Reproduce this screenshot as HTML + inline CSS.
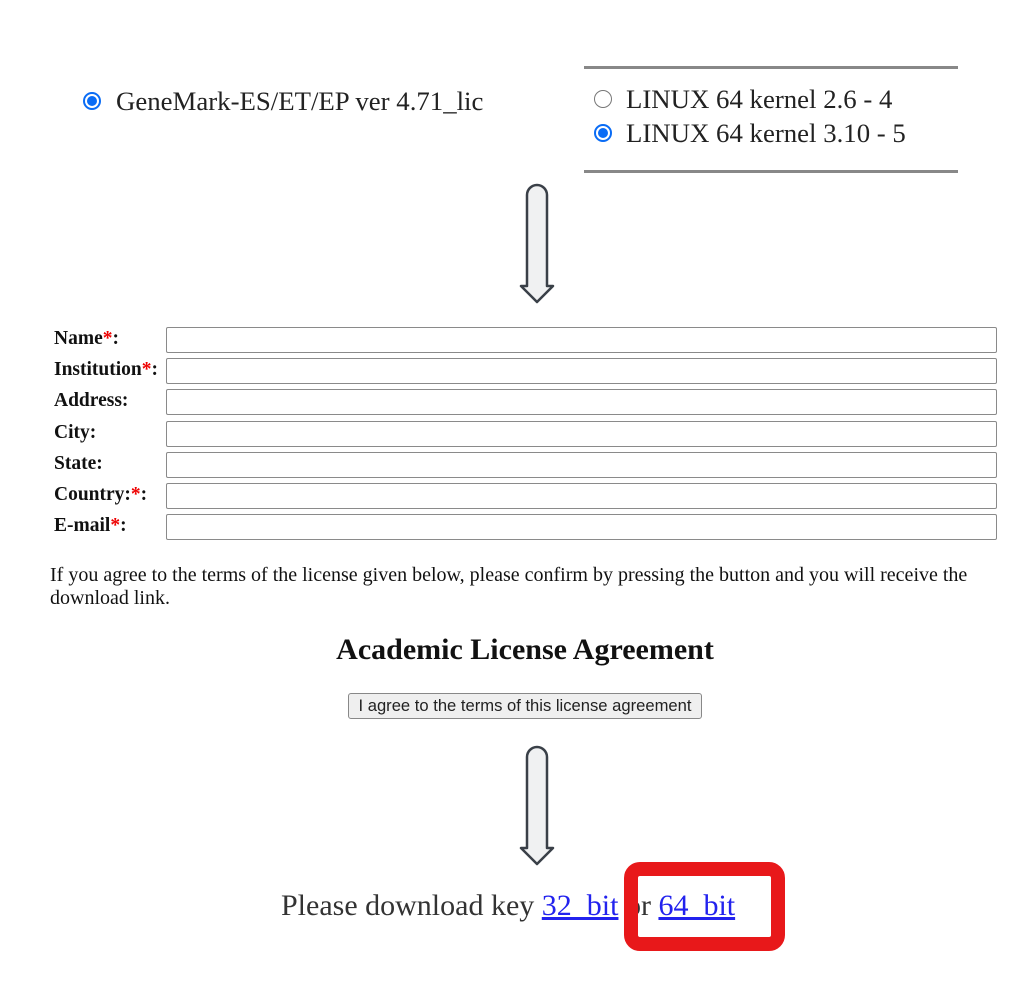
<!DOCTYPE html>
<html><head><meta charset="utf-8"><style>
body{margin:0;width:1024px;height:998px;background:#fff;font-family:"Liberation Serif",serif;color:#222;position:relative;overflow:hidden}
.a{position:absolute;white-space:nowrap}
.rad{position:absolute;width:18px;height:18px;border-radius:50%;box-sizing:border-box}
.on{border:2px solid #0a6cf5;background:#fff}
.on::after{content:"";position:absolute;left:2px;top:2px;width:10px;height:10px;border-radius:50%;background:#0a6cf5}
.off{border:1.5px solid #777;background:#fff}
.big{font-size:26.8px;color:#222}
.lbl{font-weight:bold;font-size:19.5px;color:#111}
.lbl b{color:#e00}
.inp{position:absolute;left:166px;width:831px;height:26px;box-sizing:border-box;border:1px solid #8a8a8a;border-radius:2px;background:#fff}
.hr{position:absolute;left:584px;width:374px;height:3px;background:#888}
a{color:#2222ee}
</style></head><body>
<div class="rad on" style="left:83px;top:92px"></div>
<div class="a big" style="left:116px;top:86px">GeneMark-ES/ET/EP ver 4.71_lic</div>
<div class="hr" style="top:66px"></div>
<div class="hr" style="top:170px"></div>
<div class="rad off" style="left:594px;top:90px"></div>
<div class="a big" style="left:626px;top:84px">LINUX 64 kernel 2.6 - 4</div>
<div class="rad on" style="left:594px;top:124px"></div>
<div class="a big" style="left:626px;top:118px">LINUX 64 kernel 3.10 - 5</div>

<svg class="a" style="left:515px;top:180px" width="46" height="126"><path d="M12,15 A10,10 0 0 1 32,15 L32,106 L38,106 L22,122 L6,106 L12,106 Z" fill="#f0f1f2" stroke="#3a4048" stroke-width="2.5" stroke-linejoin="round"/></svg>

<div class="a lbl" style="left:54px;top:328px">Name<b>*</b>:</div>
<div class="a lbl" style="left:54px;top:359px">Institution<b>*</b>:</div>
<div class="a lbl" style="left:54px;top:390px">Address:</div>
<div class="a lbl" style="left:54px;top:422px">City:</div>
<div class="a lbl" style="left:54px;top:453px">State:</div>
<div class="a lbl" style="left:54px;top:484px">Country:<b>*</b>:</div>
<div class="a lbl" style="left:54px;top:515px">E-mail<b>*</b>:</div>
<div class="inp" style="top:327px"></div>
<div class="inp" style="top:358px"></div>
<div class="inp" style="top:389px"></div>
<div class="inp" style="top:421px"></div>
<div class="inp" style="top:452px"></div>
<div class="inp" style="top:483px"></div>
<div class="inp" style="top:514px"></div>

<div class="a" style="left:50px;top:564px;font-size:20px;line-height:23px;color:#111;white-space:normal;width:960px">If you agree to the terms of the license given below, please confirm by pressing the button and you will receive the download link.</div>
<div class="a" style="left:0;width:1050px;text-align:center;top:633px;font-size:30px;font-weight:bold;color:#111">Academic License Agreement</div>
<div class="a" style="left:348px;top:693px;width:354px;height:26px;box-sizing:border-box;border:1px solid #888;border-radius:3px;background:#efefef;font-family:'Liberation Sans',sans-serif;font-size:16.6px;text-align:center;line-height:24px;color:#222">I agree to the terms of this license agreement</div>

<svg class="a" style="left:515px;top:742px" width="46" height="126"><path d="M12,15 A10,10 0 0 1 32,15 L32,106 L38,106 L22,122 L6,106 L12,106 Z" fill="#f0f1f2" stroke="#3a4048" stroke-width="2.5" stroke-linejoin="round"/></svg>

<div class="a" style="left:281px;top:889px;font-size:30px;color:#333">Please download key <a href="#">32_bit</a> or <a href="#">64_bit</a></div>
<div class="a" style="left:624px;top:862px;width:161px;height:89px;box-sizing:border-box;border:14px solid #e8181a;border-radius:16px"></div>
</body></html>
